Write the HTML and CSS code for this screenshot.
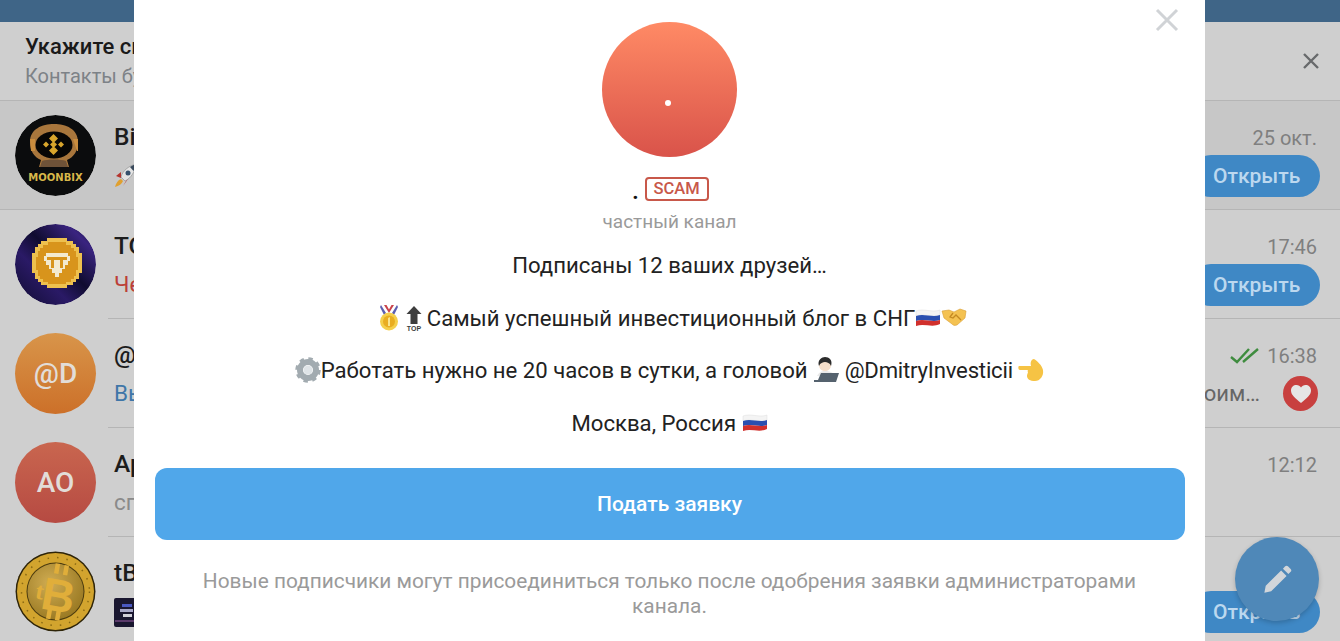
FILE: index.html
```html
<!DOCTYPE html>
<html lang="en">
<head>
  <meta charset="UTF-8">
  <meta name="viewport" content="width=device-width, initial-scale=1.0">
  <title>Чаты</title>
  <link rel="stylesheet" href="styles.css">
</head>
<body>

<div class="app">
  <div class="top-bar"></div>

  <!-- Banner above the chat list -->
  <div class="banner">
    <div class="banner-text">
      <div class="banner-title">Укажите свой день рождения</div>
      <div class="banner-sub">Контакты будут видеть его в профиле</div>
    </div>
    <svg width="18" height="18" viewBox="0 0 18 18"><path d="M2 2 L16 16 M16 2 L2 16" stroke="#686a6c" stroke-width="2.4"/></svg>
  </div>

  <!-- Chat list -->
  <div class="chat pinned">
    <svg class="avatar" viewBox="0 0 81 81">
      <circle cx="40.5" cy="40.5" r="40.5" fill="#0b0c0d"/>
      <path d="M15 27 C15 14 27 9 39 9 C51 9 63 14 63 27 C63 36 59 42 52 45 L54 52 H24 L26 45 C19 42 15 36 15 27Z" fill="#a8763c"/>
      <path d="M15 24 H20 V36 H16Z M58 24 H63 V36 H62Z" fill="#c98c3e"/>
      <ellipse cx="39" cy="30" rx="18.500" ry="13.500" fill="#070605"/>
      <path d="M38.500 19 L43 23.500 L38.500 28 L34 23.500Z M31 26.500 L34 29.500 L31 32.500 L28 29.500Z M46 26.500 L49 29.500 L46 32.500 L43 29.500Z M38.500 26 L42 29.500 L38.500 33 L35 29.500Z M34 35.500 L38.500 31 L43 35.500 L38.500 40Z" fill="#d8a52c"/>
      <path d="M27 46 C32 44 46 44 51 46 L53 52 H25Z" fill="#6e5238"/>
      <text x="40.500" y="66" text-anchor="middle" class="moonbix">MOONBIX</text>
    </svg>
    <div class="chat-body">
      <div class="chat-name">Binance Moonbix</div>
      <div class="chat-preview">
        <svg class="mini" width="23" height="26" viewBox="0 0 23 26">
          <path d="M22 2 C15 4 9 8 7 15 L11 19 C17 16 21 10 22 2Z" fill="#e4e4e4" stroke="#8a8a8a" stroke-width="0.600"/>
          <path d="M22 2 C20 2.500 18 3.500 16 5 L19.500 9 C20.800 7 21.800 4.500 22 2Z" fill="#3a4a5c"/>
          <circle cx="14" cy="11" r="2.500" fill="#35506c"/>
          <path d="M7 10 L2 14 L7 16Z M12 19 L9 24 L14 17Z" fill="#b5342e"/>
          <path d="M7 17 C4 18 2 21 1 25 C5 24 8 22 9 19Z" fill="#e0a02f"/>
        </svg>
      </div>
    </div>
    <div class="chat-side">
      <div class="chat-time">25 окт.</div>
      <div class="open-btn">Открыть</div>
    </div>
  </div>

  <div class="chat">
    <svg class="avatar" viewBox="0 0 81 81">
      <defs><linearGradient id="tcBg" x1="0" y1="1" x2="1" y2="0"><stop offset="0" stop-color="#100c30"/><stop offset="0.35" stop-color="#2a1a66"/><stop offset="0.55" stop-color="#100c30"/><stop offset="0.82" stop-color="#3a2480"/><stop offset="1" stop-color="#100c30"/></linearGradient></defs>
      <circle cx="40.5" cy="40.5" r="40.5" fill="url(#tcBg)"/>
      <path d="M32 14 H52 V17 H58 V20 H61 V23 H64 V29 H67 V49 H64 V55 H61 V58 H58 V61 H52 V64 H32 V61 H26 V58 H23 V55 H20 V49 H17 V29 H20 V23 H23 V20 H26 V17 H32Z" fill="#eec04e"/>
      <path d="M33 18 H51 V21 H56 V24 H59 V27 H61 V33 H63 V46 H61 V52 H59 V55 H56 V58 H51 V60 H33 V58 H28 V55 H25 V52 H23 V46 H21 V33 H23 V27 H25 V24 H28 V21 H33Z" fill="#d8941c"/>
      <path d="M31 29 H53 V32 H55 V37 H53 V41 H50 V45 H47 V49 H44 V53 H40 V49 H37 V45 H34 V41 H31 V37 H29 V32 H31Z" fill="#f3ead0"/>
      <path d="M32 33 H52 V36 H48 V44 H45 V36 H39 V44 H36 V36 H32Z" fill="#d8941c"/>
    </svg>
    <div class="chat-body">
      <div class="chat-name">TON Community</div>
      <div class="chat-preview red">Черновик</div>
    </div>
    <div class="chat-side">
      <div class="chat-time">17:46</div>
      <div class="open-btn">Открыть</div>
    </div>
  </div>

  <div class="chat">
    <div class="avatar letter orange">@D</div>
    <div class="chat-body">
      <div class="chat-name">@Dmitry</div>
      <div class="chat-preview blue">Вы</div>
    </div>
    <div class="chat-side">
      <div class="chat-time">
        <svg width="30" height="16" viewBox="0 0 30 16"><path d="M1 9 L7 14 L19 1 M13 14 L28 1" fill="none" stroke="#3f8c3f" stroke-width="2.400"/></svg>
        16:38
      </div>
      <div class="side-row">
        <span class="preview-end">стоим…</span>
        <div class="heart-badge">
          <svg width="22" height="20" viewBox="0 0 22 20"><path d="M11 19 C5 14 1 11 1 6.500 C1 3 3.500 1 6.500 1 C8.500 1 10 2 11 3.500 C12 2 13.500 1 15.500 1 C18.500 1 21 3 21 6.500 C21 11 17 14 11 19Z" fill="#e6e6e6"/></svg>
        </div>
      </div>
    </div>
  </div>

  <div class="chat">
    <div class="avatar letter red-bg">АО</div>
    <div class="chat-body">
      <div class="chat-name">Артём О.</div>
      <div class="chat-preview gray">спасибо</div>
    </div>
    <div class="chat-side">
      <div class="chat-time">12:12</div>
    </div>
  </div>

  <div class="chat">
    <svg class="avatar" viewBox="0 0 81 81">
      <defs><radialGradient id="coin" cx="0.4" cy="0.35" r="0.75"><stop offset="0" stop-color="#d0ac52"/><stop offset="1" stop-color="#94741e"/></radialGradient></defs>
      <circle cx="40.5" cy="40.5" r="40" fill="#2e2408"/>
      <circle cx="40.5" cy="40.5" r="38.500" fill="#d2a42e"/>
      <circle cx="40.5" cy="40.5" r="34" fill="none" stroke="#8a6a14" stroke-width="1.500" stroke-dasharray="1.500 8"/>
      <circle cx="40.5" cy="40.5" r="29" fill="#4a3a0e"/>
      <circle cx="40.5" cy="40.5" r="28" fill="url(#coin)"/>
      <g transform="rotate(10 42 41)">
        <path d="M38 13 V23 M47 13 V23 M38 59 V69 M47 59 V69" stroke="#e0ae3a" stroke-width="4.500"/>
        <text x="44" y="60" text-anchor="middle" class="coin-b">B</text>
        <text x="25" y="51" text-anchor="middle" class="coin-t">t</text>
      </g>
    </svg>
    <div class="chat-body">
      <div class="chat-name">tBTC</div>
      <div class="chat-preview">
        <svg class="mini" width="22" height="29" viewBox="0 0 22 29">
          <rect width="22" height="29" rx="2" fill="#1a1730"/>
          <rect x="8" y="6" width="10" height="3" fill="#4a58c0"/>
          <rect x="6" y="11" width="13" height="3" fill="#a8a8c8"/>
          <rect x="9" y="16" width="9" height="3" fill="#d0d0d8"/>
          <rect x="1" y="22" width="20" height="2" fill="#5a3a6a"/>
        </svg>
      </div>
    </div>
    <div class="chat-side">
      <div class="chat-time"></div>
      <div class="open-btn">Открыть</div>
    </div>
  </div>

  <!-- Compose button -->
  <div class="fab">
    <svg width="29" height="29" viewBox="0 0 32 32"><path d="M1.500 30.500 L3 23 L20 6 L26 12 L9 29Z M22 4 L24.500 1.500 C25.500 0.500 26.500 0.500 27.500 1.500 L30.500 4.500 C31.500 5.500 31.500 6.500 30.500 7.500 L28 10Z" fill="#d2d6da"/></svg>
  </div>

  <!-- Channel invite sheet -->
  <div class="sheet">
    <svg class="sheet-close" width="24" height="24" viewBox="0 0 24 24"><path d="M2 2 L22 22 M22 2 L2 22" stroke="#d0d3d6" stroke-width="3"/></svg>
    <div class="channel-avatar"><span class="channel-dot"></span></div>
    <div class="channel-title">
      <span class="channel-name">.</span>
      <span class="scam">SCAM</span>
    </div>
    <div class="channel-sub">частный канал</div>

    <div class="channel-about">
      <p>Подписаны 12 ваших друзей…</p>
      <p>
        <svg class="emoji" width="26" height="26" viewBox="0 0 26 26">
          <path d="M9 0 L14 8 L12 10 L8 2Z" fill="#5c5fb0"/>
          <path d="M25 0 L20 8 L22 10 L26 2Z" fill="#5c5fb0"/>
          <path d="M12 0 L17 8 L22 0 H19.500 L17 4.500 L14.500 0Z" fill="#c9424a"/>
          <circle cx="17" cy="16.500" r="9" fill="#f5cf4a"/>
          <circle cx="17" cy="16.500" r="6" fill="#e9ad20"/>
          <path d="M16 13 L18 12 V21 H16Z" fill="#f9e48c"/>
        </svg>
        <svg class="emoji" width="23.500" height="26" viewBox="0 0 23.500 26">
          <path d="M11 1 L18.500 9 H14.500 V19 H7.500 V9 H3.500Z" fill="#3d3d3d"/>
          <text x="11" y="26" text-anchor="middle" class="top-label">TOP</text>
        </svg>Самый успешный инвестиционный блог в СНГ<svg class="emoji" width="26" height="26" viewBox="0 0 26 26">
          <path d="M1 6 C9 3 17 8 25 5 V10 C17 13 9 8 1 11Z" fill="#f4f4f4" stroke="#ddd" stroke-width="0.500"/>
          <path d="M1 11 C9 8 17 13 25 10 V15 C17 18 9 13 1 16Z" fill="#2a4fb0"/>
          <path d="M1 16 C9 13 17 18 25 15 V19 C17 23 9 18 1 21Z" fill="#d1302c"/>
        </svg><svg class="emoji" width="26" height="26" viewBox="0 0 26 26">
          <path d="M1 6 L8 5 L13 7 L19 4 L25 6 L24 13 L16 20 C13 21 12 20 11 19 L3 13Z" fill="#f4c252" stroke="#d99e34" stroke-width="0.600"/>
          <path d="M12 8 L9 12 L12 13 L15 10 L20 15" fill="none" stroke="#c58a22" stroke-width="1.300"/>
        </svg>
      </p>
      <p>
        <svg class="emoji" width="26" height="26" viewBox="0 0 26 26">
          <circle cx="13" cy="13" r="8" fill="none" stroke="#a2abb0" stroke-width="6"/>
          <circle cx="13" cy="13" r="11" fill="none" stroke="#a2abb0" stroke-width="3.500" stroke-dasharray="4.300 4.340"/>
          <circle cx="13" cy="13" r="4.500" fill="#dfe4e7"/>
        </svg>Работать нужно не 20 часов в сутки, а головой
        <svg class="emoji" width="26" height="26" viewBox="0 0 26 26">
          <path d="M6 8 C6 3 9 1 12 1 C16 1 18 4 18 8 C18 12 15 14 12 14 C9 14 6 12 6 8Z" fill="#f6dfca"/>
          <path d="M6 9 C4 3 9 0 12 0 C16 0 20 3 18 9 C17 6 14 5 12 5 C10 5 7 6 6 9Z" fill="#2c2c2c"/>
          <path d="M4 19 C6 15 9 14 12 14 C16 14 20 15 23 19Z" fill="#e9e9e9"/>
          <path d="M8 16 H26 L23 25 H1 L1 23 H5Z" fill="#55626e"/>
        </svg>
        <span class="handle">@DmitryInvesticii</span>
        <svg class="emoji" width="26" height="26" viewBox="0 0 26 26">
          <path d="M1 9 H13 C12 6 13 2 16 2 C19 4 24 8 25 13 C26 19 22 24 17 24 C12 24 9 22 9 19 C9 17 10 16 10 15 C9 14 10 13 10 13 H2 C0 13 0 9 1 9Z" fill="#f6c344"/>
        </svg>
      </p>
      <p>Москва, Россия
        <svg class="emoji" width="26" height="26" viewBox="0 0 26 26">
          <path d="M1 6 C9 3 17 8 25 5 V10 C17 13 9 8 1 11Z" fill="#f4f4f4" stroke="#ddd" stroke-width="0.500"/>
          <path d="M1 11 C9 8 17 13 25 10 V15 C17 18 9 13 1 16Z" fill="#2a4fb0"/>
          <path d="M1 16 C9 13 17 18 25 15 V19 C17 23 9 18 1 21Z" fill="#d1302c"/>
        </svg>
      </p>
    </div>

    <button class="join-btn">Подать заявку</button>
    <div class="join-note">Новые подписчики могут присоединиться только после одобрения заявки администраторами канала.</div>
  </div>
</div>

</body>
</html>
```

FILE: styles.css
```css
html, body {
  margin: 0;
  padding: 0;
  height: 100%;
  overflow: hidden;
}

body {
  font-family: Roboto, "Liberation Sans", sans-serif;
  background-color: #cfcfcf;
}

.app {
  position: relative;
  height: 641px;
  overflow: hidden;
}

.top-bar {
  height: 22px;
  background-color: #3f6587;
}

.banner {
  height: 78px;
  padding: 0 20px 0 25px;
  display: flex;
  align-items: center;
  justify-content: space-between;
  border-bottom: 1px solid #b5b5b5;
}

.banner-title {
  font-size: 22px;
  font-weight: 500;
  color: #1a1a1a;
  margin-bottom: 5px;
}

.banner-sub {
  font-size: 20px;
  color: #7d8287;
}

.chat {
  height: 109px;
  box-sizing: border-box;
  padding: 14px 23px 0 15px;
  display: flex;
  position: relative;
}

.chat::after {
  content: "";
  position: absolute;
  left: 108px;
  right: 0;
  bottom: 0;
  height: 1px;
  background-color: #b5b5b5;
}

.pinned {
  background-color: #c7c7c7;
}

.pinned::after {
  left: 0;
}

.avatar {
  width: 81px;
  height: 81px;
  flex-shrink: 0;
  border-radius: 50%;
}

.letter {
  display: flex;
  align-items: center;
  justify-content: center;
  font-size: 28px;
  font-weight: 500;
  color: #e2ddd8;
}

.orange {
  background: linear-gradient(#d8954a, #cc7029);
}

.red-bg {
  background: linear-gradient(#c9664f, #b64a42);
}

.chat-body {
  flex: 1;
  min-width: 0;
  padding: 6px 0 0 18px;
}

.chat-name {
  font-size: 24.5px;
  font-weight: 500;
  color: #1c1c1c;
  line-height: 32px;
}

.chat-preview {
  margin-top: 9px;
  font-size: 22.5px;
  line-height: 26px;
  color: #757575;
}

.red {
  color: #bc3f38;
}

.blue {
  color: #3f76a8;
}

.gray {
  color: #8a8a8a;
}

.chat-side {
  width: 130px;
  flex-shrink: 0;
  display: flex;
  flex-direction: column;
  align-items: flex-end;
}

.chat-time {
  height: 26px;
  margin-top: 10px;
  font-size: 20px;
  line-height: 26px;
  color: #7f7f7f;
  display: flex;
  align-items: center;
  gap: 7px;
}

.open-btn {
  margin: 4px -3px 0 0;
  width: 130px;
  height: 42px;
  box-sizing: border-box;
  padding-left: 23px;
  border-radius: 21px;
  background-color: #3f88c5;
  color: #bcd8ef;
  font-size: 21px;
  font-weight: 500;
  line-height: 42px;
}

.side-row {
  margin: 7px -1px 0 0;
  display: flex;
  align-items: center;
  gap: 23px;
}

.preview-end {
  font-size: 22px;
  color: #666;
  white-space: nowrap;
}

.heart-badge {
  width: 35px;
  height: 35px;
  border-radius: 50%;
  background-color: #c8403f;
  display: flex;
  align-items: center;
  justify-content: center;
}

.fab {
  position: absolute;
  left: 1235px;
  top: 537px;
  width: 84px;
  height: 84px;
  border-radius: 50%;
  background-color: #4f88b8;
  box-shadow: 0 2px 5px rgba(0, 0, 0, 0.2);
  display: flex;
  align-items: center;
  justify-content: center;
}

/* sheet */
.sheet {
  position: absolute;
  left: 134px;
  top: 0;
  bottom: 0;
  width: 1071px;
  box-sizing: border-box;
  padding-top: 22px;
  background-color: #fff;
  display: flex;
  flex-direction: column;
  align-items: center;
}

.sheet-close {
  position: absolute;
  top: 8px;
  right: 26px;
}

.channel-avatar {
  width: 135px;
  height: 135px;
  border-radius: 50%;
  background: linear-gradient(#ff8a65, #d9534a);
  display: flex;
  align-items: center;
  justify-content: center;
}

.channel-dot {
  width: 6px;
  height: 6px;
  margin: 27px 3px 0 0;
  border-radius: 50%;
  background-color: #fff;
}

.channel-title {
  margin: 20px 0 0 2px;
  height: 24px;
  display: flex;
  align-items: center;
  gap: 6px;
}

.channel-name {
  font-size: 22px;
  font-weight: 700;
  color: #111;
  line-height: 24px;
  padding-top: 6px;
}

.scam {
  box-sizing: border-box;
  height: 24px;
  width: 64px;
  border: 2px solid #c8584a;
  border-radius: 4px;
  color: #c8584a;
  font-size: 16.5px;
  font-weight: 500;
  line-height: 20px;
  text-align: center;
}

.channel-sub {
  margin-top: 8px;
  font-size: 19px;
  line-height: 26px;
  color: #9a9a9a;
}

.channel-about {
  margin-top: 17px;
  text-align: center;
  font-size: 22.15px;
  line-height: 26.3px;
  color: #222;
}

.channel-about p {
  height: 26.3px;
  margin: 0 0 26.3px 0;
  white-space: nowrap;
}

.channel-about p:last-child {
  margin-bottom: 0;
}

.handle {
  letter-spacing: -0.2px;
}

/* all emoji boxes are 26px tall, kept out of the line height with negative margins */
.emoji {
  vertical-align: 3px;
  margin: -8px 0;
}

.join-btn {
  display: block;
  flex-shrink: 0;
  width: 1030px;
  height: 72px;
  margin-top: 32px;
  border: none;
  border-radius: 12px;
  background-color: #50a7ea;
  color: #fff;
  font-family: inherit;
  font-size: 21px;
  font-weight: 500;
}

.join-note {
  width: 960px;
  margin-top: 29px;
  text-align: center;
  font-size: 20.85px;
  line-height: 24.5px;
  color: #9a9a9a;
}

.moonbix {
  font-family: "DejaVu Sans", sans-serif;
  font-size: 10px;
  font-weight: 700;
  fill: #d8b84a;
}

.coin-b {
  font-family: "Liberation Sans", sans-serif;
  font-size: 46px;
  font-weight: 700;
  fill: #e0ae3a;
}

.coin-t {
  font-family: "Liberation Serif", serif;
  font-size: 24px;
  font-weight: 700;
  fill: #e0ae3a;
}

.top-label {
  font-family: "Liberation Sans", sans-serif;
  font-size: 7px;
  font-weight: 700;
  fill: #3d3d3d;
}
```
